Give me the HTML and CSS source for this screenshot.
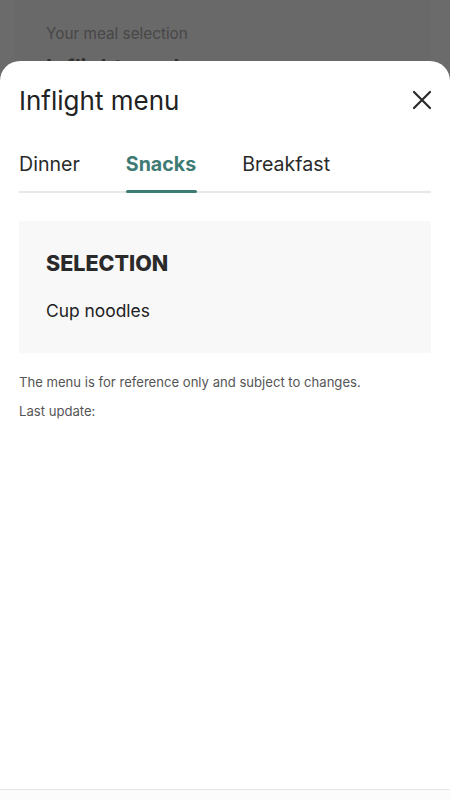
FILE: index.html
```html
<!DOCTYPE html>
<html>
<head>
<meta charset="utf-8">
<link rel="stylesheet" href="styles.css">
</head>
<body>
<div class="backdrop">
  <div class="bg-card">
    <div class="bg-sub">Your meal selection</div>
    <div class="bg-title">Inflight meal</div>
  </div>
</div>
<div class="sheet">
  <div class="sheet-head">
    <h1 class="sheet-title">Inflight menu</h1>
    <button class="close" aria-label="Close">
      <svg width="20" height="20" viewBox="0 0 20 20"><path d="M2 2 L18 18 M18 2 L2 18" stroke="#2a2a2a" stroke-width="2.2" stroke-linecap="round" fill="none"/></svg>
    </button>
  </div>
  <div class="tabs">
    <div class="tab">Dinner</div>
    <div class="tab active">Snacks</div>
    <div class="tab">Breakfast</div>
  </div>
  <div class="menu-card">
    <div class="menu-heading">SELECTION</div>
    <div class="menu-item">Cup noodles</div>
  </div>
  <p class="note">The menu is for reference only and subject to changes.</p>
  <p class="note">Last update:</p>
  <div class="sheet-foot"></div>
</div>
</body>
</html>
```
FILE: styles.css
```css
* { box-sizing: border-box; }
html, body { margin: 0; padding: 0; }
body {
  width: 450px;
  height: 800px;
  overflow: hidden;
  background: #6b6b6b;
  font-family: Inter, "Noto Sans", sans-serif;
  position: relative;
}
.backdrop {
  padding: 0 20px 0 15px;
}
.bg-card {
  background: #696969;
  padding: 24px 0 0 31px;
  height: 100px;
}
.bg-sub {
  font-size: 15.3px;
  color: #474747;
  line-height: 20px;
}
.bg-title {
  font-size: 22px;
  font-weight: 700;
  color: #333;
  margin-top: 10px;
}
.sheet {
  position: absolute;
  left: 0;
  right: 0;
  top: 61px;
  bottom: 0;
  background: #fff;
  border-radius: 20px 20px 0 0;
  padding: 0 19px;
}
.sheet-head {
  display: flex;
  align-items: center;
  justify-content: space-between;
  height: 78px;
}
.sheet-title {
  margin: 0;
  font-size: 26px;
  font-weight: 400;
  color: #222;
}
.close {
  border: 0;
  background: none;
  padding: 0;
  width: 20px;
  height: 20px;
  display: flex;
  margin-right: -1px;
}
.tabs {
  display: flex;
  gap: 46px;
  border-bottom: 2px solid #e8e8e8;
  height: 54px;
  align-items: stretch;
}
.tab {
  font-size: 19.6px;
  color: #2a2a2a;
  display: flex;
  align-items: center;
  padding-bottom: 2px;
  position: relative;
}
.tab.active {
  color: #3f7b75;
  font-weight: 700;
}
.tab.active::after {
  content: "";
  position: absolute;
  left: 0;
  right: -1px;
  bottom: -2px;
  height: 3px;
  border-radius: 2px;
  background: #3f7b75;
}
.menu-card {
  margin-top: 28px;
  background: #f8f8f8;
  padding: 29px 27px 30px;
  height: 132px;
}
.menu-heading {
  font-size: 21.5px;
  font-weight: 800;
  color: #2a2a2a;
  line-height: 26px;
}
.menu-item {
  margin-top: 24px;
  font-size: 17.4px;
  color: #222;
  line-height: 22px;
}
.note {
  margin: 0;
  font-size: 13.1px;
  color: #555;
  line-height: 29px;
}
.sheet-foot {
  position: absolute;
  left: 0;
  right: 0;
  bottom: 0;
  height: 11px;
  border-top: 1px solid #e6e6e6;
  background: #fcfcfc;
}
.menu-card + .note { margin-top: 15px; }
```
